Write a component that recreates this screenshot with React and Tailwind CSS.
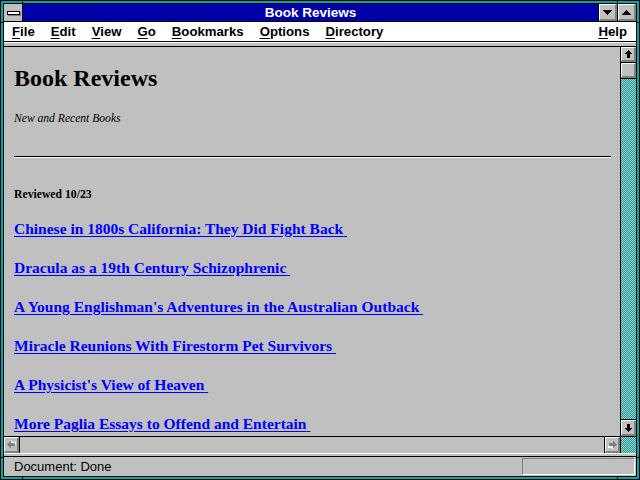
import React from 'react'

const bevel = 'bg-[#c0c0c0] border-t border-l border-t-white border-l-white border-b-2 border-r-2 border-b-[#808080] border-r-[#808080]'
const checker = 'bg-[repeating-conic-gradient(#00a8a8_0_25%,#c0c0c0_0_50%)] bg-[length:2px_2px]'

const links = [
  'Chinese in 1800s California: They Did Fight Back',
  'Dracula as a 19th Century Schizophrenic',
  "A Young Englishman's Adventures in the Australian Outback",
  'Miracle Reunions With Firestorm Pet Survivors',
  "A Physicist's View of Heaven",
  'More Paglia Essays to Offend and Entertain',
]

const menus = ['File', 'Edit', 'View', 'Go', 'Bookmarks', 'Options', 'Directory']

function Arrow({ dir, gray }) {
  // arrow pointing up, rotated for the other directions
  const rot = { up: 0, down: 180, left: 270, right: 90 }[dir]
  const fill = gray ? '#808080' : '#000'
  return (
    <svg width="11" height="11" viewBox="0 0 11 11" shapeRendering="crispEdges" style={{ transform: `rotate(${rot}deg)` }}>
      {gray && <path d="M6.5 2 L10.5 6 H8.5 V10 H5.5 V6 H3.5 Z" fill="#fff" />}
      <path d="M5.5 1 L9.5 5 H7 V9 H4 V5 H1.5 Z" fill={fill} />
    </svg>
  )
}

function Tri({ up }) {
  return (
    <svg width="9" height="5" viewBox="0 0 9 5" shapeRendering="crispEdges">
      <path d={up ? 'M4.5 0 L9 5 H0 Z' : 'M0 0 H9 L4.5 5 Z'} fill="#000" />
    </svg>
  )
}

function Menu({ label }) {
  return (
    <span>
      <span className="underline underline-offset-2">{label[0]}</span>
      {label.slice(1)}
    </span>
  )
}

export default function App() {
  return (
    <div className="relative w-[640px] h-[480px] bg-black p-px font-['Liberation_Sans',Arial,sans-serif]">
      <div className="w-full h-full bg-[#00a8a8] p-[2px]">
        <div className="w-full h-full bg-black p-px">
          <div className="w-full h-full flex flex-col bg-[#c0c0c0]">
            {/* Title bar */}
            <div className="h-[17px] flex bg-black gap-px">
              <div className="w-[18px] bg-[#c0c0c0] flex items-center justify-center">
                <div className="w-[13px] h-[4px] bg-white border border-black shadow-[1px_1px_0_#808080]" />
              </div>
              <div className="flex-1 bg-[#0000a8] text-white font-bold text-[13.5px] leading-[17px] text-center">
                Book Reviews
              </div>
              <div className={`w-[18px] flex items-center justify-center ${bevel}`}>
                <Tri />
              </div>
              <div className={`w-[18px] flex items-center justify-center ${bevel}`}>
                <Tri up />
              </div>
            </div>
            <div className="h-px bg-black" />

            {/* Menu bar */}
            <div className="h-[19px] bg-white flex items-center pl-[8px] pr-[9px] gap-[16px] text-[13.2px] font-bold text-black leading-[19px]">
              {menus.map((m) => (
                <Menu key={m} label={m} />
              ))}
              <span className="ml-auto">
                <Menu label="Help" />
              </span>
            </div>
            <div className="h-px bg-black" />
            <div className="h-px bg-white" />
            <div className="h-[3px] bg-[#c0c0c0]" />
            <div className="h-px bg-black" />

            {/* Main area */}
            <div className="h-[389px] flex">
              <div className="flex-1 overflow-hidden pl-[10px] pr-[9px] text-black font-['Liberation_Serif','Times_New_Roman',serif]">
                <h1 className="mt-[17px] text-[24px] leading-[28px] font-bold">Book Reviews</h1>
                <p className="mt-[20px] text-[11.6px] leading-[14px] italic">New and Recent Books</p>
                <div className="mt-[30px] h-px bg-black" />
                <div className="h-px bg-white" />
                <p className="mt-[30px] text-[11.7px] leading-[14px] font-bold">Reviewed 10/23</p>
                <div className="mt-[17px] flex flex-col gap-[20px]">
                  {links.map((l) => (
                    <a key={l} href="#" className="text-[15.5px] leading-[19px] font-bold text-[#0000ff] underline underline-offset-2 whitespace-nowrap">
                      {l}{'\u00a0'}
                    </a>
                  ))}
                </div>
              </div>

              {/* Vertical scrollbar */}
              <div className="w-[16px] border-l border-black flex flex-col">
                <div className="h-[16px] border-b border-black">
                  <div className={`h-full flex items-center justify-center ${bevel}`}>
                    <Arrow dir="up" />
                  </div>
                </div>
                <div className="h-[16px] border-b border-black">
                  <div className={`h-full ${bevel}`} />
                </div>
                <div className={`flex-1 ${checker}`} />
                <div className="h-[17px] border-t border-black">
                  <div className={`h-full flex items-center justify-center ${bevel}`}>
                    <Arrow dir="down" />
                  </div>
                </div>
              </div>
            </div>

            {/* Horizontal scrollbar */}
            <div className="h-[17px] border-t border-black flex">
              <div className="w-[16px] border-r border-black">
                <div className={`h-full flex items-center justify-center ${bevel}`}>
                  <Arrow dir="left" gray />
                </div>
              </div>
              <div className="flex-1 bg-[#c0c0c0]" />
              <div className="w-[16px] border-l border-black">
                <div className={`h-full flex items-center justify-center ${bevel}`}>
                  <Arrow dir="right" gray />
                </div>
              </div>
              <div className={`w-[16px] border-l border-black ${checker}`} />
            </div>
            <div className="h-px bg-white" />
            <div className="h-[2px] bg-[#c0c0c0]" />
            <div className="h-px bg-black" />

            {/* Status bar */}
            <div className="h-[19px] flex items-center pl-[10px] pr-px text-[13px] text-black">
              <span className="leading-[19px]">Document: Done</span>
              <div className="ml-auto w-[113px] h-[17px] border-t border-l border-[#808080] border-b border-r border-b-white border-r-white" />
            </div>
          </div>
        </div>
      </div>

      {/* frame corner ticks */}
      <div className="absolute left-[22px] top-0 w-px h-[4px] bg-black" />
      <div className="absolute left-[617px] top-0 w-px h-[4px] bg-black" />
      <div className="absolute left-[22px] bottom-0 w-px h-[4px] bg-black" />
      <div className="absolute left-[617px] bottom-0 w-px h-[4px] bg-black" />
      <div className="absolute left-0 top-[22px] w-[4px] h-px bg-black" />
      <div className="absolute right-0 top-[22px] w-[4px] h-px bg-black" />
      <div className="absolute left-0 top-[457px] w-[4px] h-px bg-black" />
      <div className="absolute right-0 top-[457px] w-[4px] h-px bg-black" />
    </div>
  )
}
